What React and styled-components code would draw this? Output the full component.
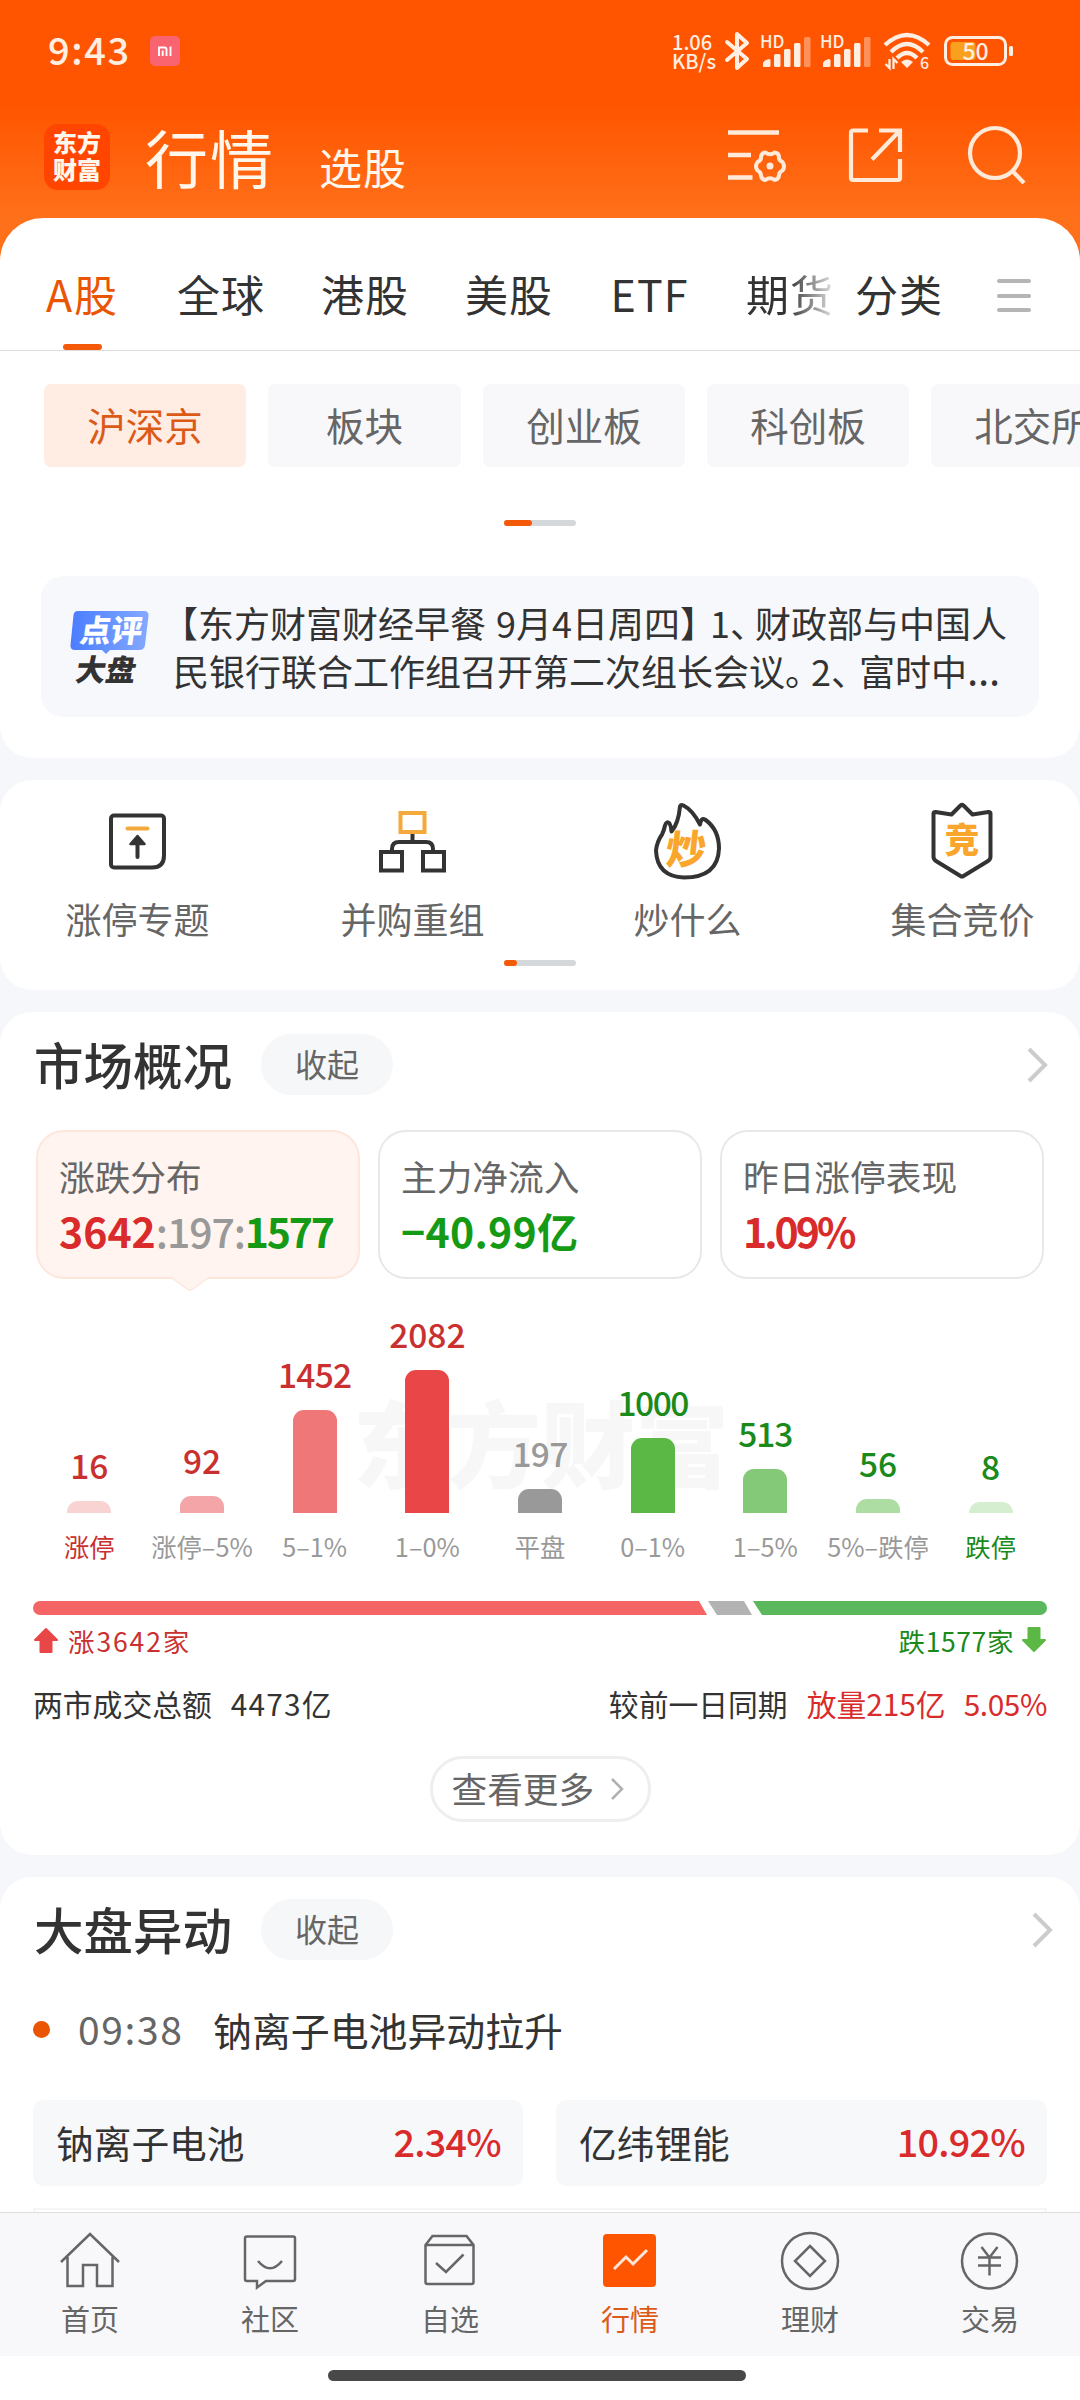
import styled, { createGlobalStyle, css } from "styled-components";

const GlobalStyle = createGlobalStyle`
  * {
    box-sizing: border-box;
  }
  body {
    margin: 0;
    background: #f5f7fa;
    font-family: "Noto Sans CJK SC", "Noto Sans", sans-serif;
    color: #333;
  }
`;

const RED = "#d92b2b";
const GREEN = "#159a15";
const ORANGE = "#ea5504";

const Screen = styled.div`
  width: 1080px;
  height: 2400px;
  display: flex;
  flex-direction: column;
  overflow: hidden;
  background: linear-gradient(#ff5500 0, #ff5500 105px, #ff701a 218px) top /
      100% 300px no-repeat,
    #f5f7fa;
`;

const Content = styled.main`
  height: 2212px;
  flex: none;
  overflow: hidden;
`;

/* status bar */

const StatusBar = styled.div`
  height: 102px;
  padding: 0 66px 0 48px;
  display: flex;
  align-items: center;
  color: #ffeee2;
`;

const Clock = styled.div`
  width: 102px;
  font-size: 38px;
  font-weight: 500;
  line-height: 40px;
  letter-spacing: 1.6px;
  padding-bottom: 4px;
`;

const MiBadge = styled.svg`
  width: 30px;
  height: 30px;
`;

const StatusRight = styled.div`
  margin-left: auto;
  display: flex;
  align-items: center;
`;

const NetSpeed = styled.div`
  width: 53px;
  font-size: 20px;
  line-height: 19px;
  font-weight: 500;
  padding-bottom: 1px;
  white-space: nowrap;
`;

const StatusIcon = styled.svg`
  display: block;
  flex: none;
  overflow: visible;
  margin-right: ${(p) => p.$gap || 0}px;
`;

/* header */

const Header = styled.header`
  height: 116px;
  padding: 0 54px 7px 44px;
  display: flex;
  align-items: center;
  color: #fff6ec;
`;

const Logo = styled.div`
  width: 66px;
  height: 66px;
  border-radius: 14px;
  background: #ff4500;
  display: flex;
  flex-direction: column;
  align-items: center;
  justify-content: center;
  padding-bottom: 4px;
  font-size: 24px;
  font-weight: 900;
  line-height: 27px;
`;

const HeaderTitle = styled.h1`
  margin: 0 0 0 35px;
  font-size: 63px;
  font-weight: 400;
  line-height: 70px;
  letter-spacing: 2px;
  padding-bottom: 1px;
`;

const HeaderSub = styled.div`
  margin: 18px 0 0 44px;
  font-size: 43px;
  line-height: 50px;
  letter-spacing: 1px;
`;

const HeaderIcons = styled.div`
  margin-left: auto;
  display: flex;
  align-items: center;
  gap: 62px;
  padding-bottom: 5px;
`;

/* white cards */

const Card = styled.section`
  background: #fff;
  border-radius: ${(p) => p.$radius || "32px"};
  height: ${(p) => p.$height}px;
  margin-bottom: 22px;
  overflow: hidden;
`;

const Tabs = styled.nav`
  height: 133px;
  border-bottom: 1px solid #dcdcdc;
  display: flex;
  padding: 0 44px;
  align-items: stretch;
`;

const TabList = styled.div`
  width: 793px;
  display: flex;
  gap: 56px;
  overflow: hidden;
  white-space: nowrap;
`;

const tabText = css`
  font-size: 43px;
  line-height: 64px;
  letter-spacing: 1px;
  padding-top: 43px;
`;

const Tab = styled.div`
  ${tabText}
  flex: none;
  min-width: ${(p) => p.$min || 0}px;
  display: flex;
  flex-direction: column;
  align-items: center;
  color: ${(p) => (p.$active ? ORANGE : "#333")};
  ${(p) =>
    p.$active &&
    css`
      letter-spacing: 2px;
      &::after {
        content: "";
        width: 39px;
        height: 6px;
        border-radius: 3px;
        margin-top: 19px;
        background: #f55a0a;
      }
    `}
  ${(p) =>
    p.$fade &&
    css`
      background: linear-gradient(90deg, #333 48%, #ddd 98%);
      background-clip: text;
      -webkit-background-clip: text;
      color: transparent;
    `}
`;

const TabMore = styled.div`
  ${tabText}
  margin-left: 18px;
  flex: none;
`;

const Burger = styled.div`
  width: 34px;
  height: 33px;
  margin: 61px 5px 0 auto;
  display: flex;
  flex-direction: column;
  justify-content: space-between;
  i {
    height: 4px;
    border-radius: 2px;
    background: #b5b5b5;
  }
`;

const Chips = styled.div`
  display: flex;
  gap: 22px;
  padding: 33px 0 0 44px;
`;

const Chip = styled.div`
  flex: none;
  width: ${(p) => p.$width}px;
  height: 83px;
  border-radius: 7px;
  background: ${(p) => (p.$active ? "#ffede4" : "#f8f8fa")};
  color: ${(p) => (p.$active ? "#dc5a17" : "#666")};
  font-size: 38.5px;
  line-height: 80px;
  text-align: center;
`;

const Pager = styled.div`
  width: 72px;
  height: 6px;
  border-radius: 3px;
  background: #d5d8db;
  margin: ${(p) => p.$top}px auto 0;
  &::before {
    content: "";
    display: block;
    width: ${(p) => p.$thumb}px;
    height: 6px;
    border-radius: 3px;
    background: #f55a0a;
  }
`;

const News = styled.div`
  height: 141px;
  margin: 50px 41px 0;
  border-radius: 22px;
  background: #f7f8fb;
  display: flex;
  align-items: center;
`;

const NewsTag = styled.svg`
  width: 104px;
  height: 100px;
  margin-left: 28px;
`;

const NewsText = styled.div`
  font-size: 36px;
  line-height: 48px;
  word-spacing: 2px;
  white-space: nowrap;
  padding-bottom: 2px;
`;

const Punct = styled.span`
  display: inline-block;
  width: ${(p) => p.$width}px;
  text-indent: ${(p) => p.$shift || 0}px;
`;

const Ellipsis = styled.span`
  font-family: "Noto Sans", sans-serif;
  font-size: 42px;
  line-height: 1px;
`;

/* shortcuts */

const Shortcuts = styled.div`
  display: grid;
  grid-template-columns: repeat(4, 275px);
`;

const Shortcut = styled.div`
  display: flex;
  flex-direction: column;
  align-items: center;
  padding-top: 21px;
  height: 180px;
  font-size: 36px;
  line-height: 52px;
  color: #666;
  svg {
    display: block;
    margin-bottom: 11px;
  }
`;

/* section heads */

const SectionHead = styled.div`
  height: 61px;
  margin: 22px 0 0;
  padding: 0 ${(p) => p.$right}px 0 34px;
  display: flex;
  align-items: center;
`;

const SectionTitle = styled.h2`
  margin: 0;
  width: 227px;
  font-size: 49.5px;
  font-weight: 500;
  line-height: 60px;
  padding-bottom: 2px;
  white-space: nowrap;
`;

const Pill = styled.div`
  width: 132px;
  height: 61px;
  border-radius: 31px;
  background: #f5f7f9;
  color: #666;
  font-size: 32px;
  line-height: 59px;
  text-align: center;
`;

const ChevronRight = styled.svg`
  margin-left: auto;
  display: block;
`;

/* stat cards */

const Stats = styled.div`
  display: grid;
  grid-template-columns: repeat(3, 324px);
  gap: 18px;
  padding: 35px 0 0 36px;
`;

const Stat = styled.div`
  position: relative;
  height: 149px;
  border-radius: 28px;
  border: 2px solid ${(p) => (p.$active ? "#fde6dc" : "#e8e8e8")};
  background: ${(p) => (p.$active ? "#fff4ef" : "#fff")};
  padding: 16px 0 0 21px;
  font-size: 35.7px;
  line-height: 56px;
  color: #666;
`;

const StatTail = styled.svg`
  position: absolute;
  left: 133px;
  bottom: -15px;
`;

const StatValue = styled.div`
  display: flex;
  font-size: 41px;
  line-height: 52px;
  font-weight: 600;
  letter-spacing: ${(p) => p.$spacing || 0}px;
  color: ${(p) => p.$color || "#999"};
`;

const ValuePart = styled.span`
  color: ${(p) => p.$color || "#999"};
  font-weight: ${(p) => (p.$color ? 600 : 500)};
  letter-spacing: ${(p) => p.$spacing || 0}px;
`;

/* distribution chart */

const Chart = styled.div`
  position: relative;
  height: 234px;
  margin: 0 33px;
  display: grid;
  grid-template-columns: repeat(9, 1fr);
`;

const Watermark = styled.div`
  position: absolute;
  left: 320px;
  top: 106px;
  font-size: 94px;
  font-weight: 900;
  line-height: 110px;
  color: #f7f7f7;
`;

const Column = styled.div`
  position: relative;
  display: flex;
  flex-direction: column;
  align-items: center;
  justify-content: flex-end;
`;

const ColumnValue = styled.div`
  font-size: 33.5px;
  font-weight: 500;
  line-height: 40px;
  margin-bottom: 16px;
  letter-spacing: ${(p) => p.$spacing || 0}px;
  color: ${(p) => p.$color};
`;

const Bar = styled.div`
  width: 44px;
  border-radius: 11px 11px 0 0;
  background: ${(p) => p.$color};
`;

const Axis = styled.div`
  margin: 15px 33px 0;
  height: 40px;
  display: grid;
  grid-template-columns: repeat(9, 1fr);
`;

const AxisLabel = styled.div`
  font-size: 25.3px;
  line-height: 37px;
  display: flex;
  justify-content: center;
  white-space: nowrap;
  color: ${(p) => p.$color || "#999"};
`;

const Ratio = styled.div`
  margin: 33px 33px 0;
  height: 14px;
  border-radius: 7px;
  overflow: hidden;
  display: flex;
  gap: 1px;
`;

const RatioPart = styled.div`
  width: ${(p) => p.$width}px;
  background: ${(p) => p.$color};
  clip-path: polygon(${(p) => p.$clip});
`;

const Line = styled.div`
  display: flex;
  align-items: center;
  height: ${(p) => p.$height}px;
  margin: ${(p) => p.$top}px 33px 0;
  font-size: ${(p) => p.$size}px;
  line-height: ${(p) => p.$height - 3}px;
  padding-bottom: 4px;
  white-space: nowrap;
`;

const Words = styled.span`
  color: ${(p) => p.$color || "#333"};
  margin-left: ${(p) => (p.$push ? "auto" : `${p.$gap || 0}px`)};
  letter-spacing: ${(p) => p.$spacing || 0}px;
`;

const MoreButton = styled.div`
  width: 221px;
  height: 66px;
  margin: 24px auto 0;
  border: 3px solid #eee;
  border-radius: 33px;
  display: flex;
  align-items: center;
  padding: 0 0 3px 19px;
  font-size: 35.7px;
  line-height: 50px;
  color: #666;
  svg {
    margin: 3px 0 0 16px;
  }
`;

/* movements */

const Move = styled.div`
  display: flex;
  align-items: center;
  margin: 39px 33px 0;
  height: 60px;
  font-size: 38.9px;
  line-height: 56px;
`;

const Dot = styled.i`
  width: 17px;
  height: 17px;
  border-radius: 50%;
  background: ${ORANGE};
`;

const Time = styled.span`
  width: 135px;
  margin-left: 28px;
  padding-bottom: 2px;
  font-size: 39px;
  letter-spacing: 1.6px;
  color: #666;
`;

const MoveText = styled.span`
  padding-bottom: 1px;
`;

const Quotes = styled.div`
  display: grid;
  grid-template-columns: 490px 491px;
  gap: 33px;
  margin: 41px 33px 22px;
`;

const Quote = styled.div`
  height: 86px;
  border-radius: 10px;
  background: #f7f8fa;
  display: flex;
  justify-content: space-between;
  padding: 0 22px 0 23px;
  font-size: 37.7px;
  line-height: 84px;
`;

const QuoteChange = styled.span`
  color: ${RED};
  font-weight: 500;
  line-height: 82px;
  letter-spacing: -0.7px;
`;

const TableEdge = styled.div`
  height: 40px;
  margin: 0 33px;
  border: 2px solid #f5f5f5;
`;

/* bottom nav */

const BottomNav = styled.nav`
  flex: none;
  height: 144px;
  border-top: 1px solid #dedede;
  background: #f8f8fb;
  display: grid;
  grid-template-columns: repeat(6, 1fr);
`;

const NavItem = styled.div`
  display: flex;
  flex-direction: column;
  align-items: center;
  padding-top: 17px;
  font-size: 29px;
  line-height: 40px;
  color: ${(p) => (p.$active ? "#dc5a17" : "#666")};
  svg {
    display: block;
    margin-bottom: 6px;
  }
`;

const HomeIndicator = styled.div`
  flex: none;
  height: 44px;
  background: #fff;
  display: flex;
  justify-content: center;
  padding: 14px 6px 0 0;
  &::after {
    content: "";
    width: 418px;
    height: 11px;
    border-radius: 6px;
    background: #484848;
  }
`;

const Signal = ({ gap }) => (
  <StatusIcon width="50" height="38" viewBox="0 0 50 38" $gap={gap} fill="#ffeee2">
    <text x="-1" y="16" fontSize="17" fontWeight="500">
      HD
    </text>
    <path d="M2 35v-4q1-3 6-4q1.500 0 1.500 1.500v5q0 1.500-1.500 1.500z" />
    <rect x="13" y="22" width="6.500" height="13" rx="1.500" />
    <rect x="23" y="17" width="6.500" height="18" rx="1.500" />
    <rect x="33" y="11" width="6.500" height="24" rx="1.500" />
    <rect x="43" y="5" width="6.500" height="30" rx="1.500" opacity=".4" />
  </StatusIcon>
);

const Arrow = ({ color, down }) => (
  <svg width="26" height="26" viewBox="0 0 26 26" fill={color} stroke={color} strokeWidth="2" strokeLinejoin="round">
    <path d="M13 2L24 13H18.500V25H7.500V13H2Z" transform={down ? "rotate(180 13 13)" : undefined} />
  </svg>
);

const Chevron = () => (
  <ChevronRight width="22" height="36" viewBox="0 0 22 36" fill="none" stroke="#ccc" strokeWidth="4">
    <path d="M2 2L18 18L2 34" />
  </ChevronRight>
);

const shortcuts = [
  {
    label: "涨停专题",
    icon: (
      <>
        <path d="M14 14.500h47a3 3 0 0 1 3 3v37q0 12-12 12h-38a3 3 0 0 1-3-3v-46a3 3 0 0 1 3-3z" />
        <path d="M27.500 27.500h20" stroke="#f3a93c" strokeLinecap="round" />
        <path d="M37.500 56v-17" strokeLinecap="round" />
        <path d="M37.500 35l7 8h-14z" fill="#333" strokeWidth="2.500" strokeLinejoin="round" />
      </>
    ),
  },
  {
    label: "并购重组",
    icon: (
      <>
        <rect x="25.500" y="12" width="24" height="19" stroke="#f3a93c" />
        <path d="M37.500 33v8M17 50v-2q0-7 7-7h27q7 0 7 7v2" />
        <rect x="6" y="51" width="21" height="18.500" />
        <rect x="48" y="51" width="21" height="18.500" />
      </>
    ),
  },
  {
    label: "炒什么",
    icon: (
      <>
        <path
          d="M30 5.500q1-2 3.500-1q9 4.500 16.500 19q1-7 5-5q14 10 14 29q-1 29-35 29q-27-1-28-27q1-9 6-16q2-4 3-9q1.500-5 4.500-2q2 3 2 8q7-8 8.500-25z"
          strokeLinejoin="round"
        />
        <text x="17" y="63" fontSize="40" fontWeight="900" fill="#faa62d" stroke="none" transform="skewX(-6) translate(4 0)">
          炒
        </text>
      </>
    ),
  },
  {
    label: "集合竞价",
    icon: (
      <>
        <path
          d="M8.500 12.500q0-1.500 2-1.500l16 2.500l9-9q1.500-1.200 3 0l9 9l16-2.500q2 0 2 1.500v43q0 3-2.500 4.500l-24.500 15q-1.500 1-3 0l-24.500-15q-2.500-1.500-2.500-4.500z"
          strokeLinejoin="round"
        />
        <text x="37" y="52" fontSize="35" fontWeight="900" fill="#faa62d" stroke="none" textAnchor="middle">
          竞
        </text>
      </>
    ),
  },
];

const columns = [
  { value: 16, height: 12, bar: "#f9d2d2", text: "#c9302f", label: "涨停", labelColor: "#c9302f" },
  { value: 92, height: 17, bar: "#f3a5a8", text: "#c9302f", label: "涨停–5%" },
  { value: 1452, height: 103, bar: "#f07778", text: "#c9302f", label: "5–1%", spacing: -0.8 },
  { value: 2082, height: 143, bar: "#e94747", text: "#c9302f", label: "1–0%" },
  { value: 197, height: 24, bar: "#999", text: "#999", label: "平盘", spacing: -0.8 },
  { value: 1000, height: 75, bar: "#5bb844", text: "#1a8a1a", label: "0–1%", spacing: -1.5 },
  { value: 513, height: 44, bar: "#84c977", text: "#1a8a1a", label: "1–5%", spacing: -1 },
  { value: 56, height: 14, bar: "#aedda3", text: "#1a8a1a", label: "5%–跌停" },
  { value: 8, height: 11, bar: "#d5eed0", text: "#1a8a1a", label: "跌停", labelColor: "#1a8a1a" },
];

const navItems = [
  {
    label: "首页",
    icon: <path d="M2 32L31 4L60 32M8.500 27V56H24V35H38V56H53.500V27" />,
  },
  {
    label: "社区",
    icon: (
      <>
        <path d="M8 6.500H54a2 2 0 0 1 2 2V49a2 2 0 0 1-2 2H27L18 57.500V51H8a2 2 0 0 1-2-2V8.500a2 2 0 0 1 2-2z" />
        <path d="M19 31q12 14.500 24 0" />
      </>
    ),
  },
  {
    label: "自选",
    icon: (
      <>
        <path d="M6.500 15L13.500 6H47.500L54.500 15V52a2 2 0 0 1-2 2H8.500a2 2 0 0 1-2-2zM6.500 15H54.500" />
        <path d="M17 33L27 42L44.500 24.500" />
      </>
    ),
  },
  {
    label: "行情",
    active: true,
    icon: (
      <>
        <rect x="4" y="4" width="53" height="53" rx="4" fill="#ff5500" stroke="none" />
        <path d="M15 39L27 27L34 34L48 20" stroke="#ffe6d8" strokeWidth="3" />
      </>
    ),
  },
  {
    label: "理财",
    icon: (
      <>
        <circle cx="31" cy="31" r="28" />
        <path d="M31 16L46 31L31 46L16 31z" />
      </>
    ),
  },
  {
    label: "交易",
    icon: (
      <>
        <circle cx="30.500" cy="31" r="27.500" />
        <path d="M22.500 17L30.500 27.500L38.500 17M30.500 27.500V45.500M19 27.500H42M19 35.500H42" />
      </>
    ),
  },
];

const App = () => {
  return (
    <Screen>
      <GlobalStyle />
      <Content>
        <StatusBar>
          <Clock>9:43</Clock>
          <MiBadge viewBox="0 0 30 30">
            <rect width="30" height="30" rx="5" fill="#fa6470" />
            <path d="M9 20V11.500H14.500Q16.500 11.500 16.500 13.500V20M12.700 14.500V20M20.500 10.500V20" fill="none" stroke="#fff" strokeWidth="1.900" />
          </MiBadge>
          <StatusRight>
            <NetSpeed>
              1.06
              <br />
              KB/s
            </NetSpeed>
            <StatusIcon width="24" height="40" viewBox="0 0 24 40" $gap={12} fill="none" stroke="#ffeee2" strokeWidth="4" strokeLinejoin="round" strokeLinecap="round">
              <path d="M2 11L22 28L12 37V3L22 12L2 29" />
            </StatusIcon>
            <Signal gap={10} />
            <Signal gap={12} />
            <StatusIcon width="48" height="38" viewBox="0 0 48 38" $gap={13} fill="none" stroke="#ffeee2" strokeWidth="4.200">
              <path d="M2 13Q24-7 46 13M8 20Q24 4 40 20M14 26Q24 16 34 26" />
              <path d="M18 30Q24 25 30 30L24 36z" fill="#ffeee2" stroke="none" />
              <path d="M6.500 27V36L2.500 32M10.500 37V27L14.500 31" strokeWidth="2.300" />
              <text x="37" y="37" fontSize="16" fontWeight="500" fill="#ffeee2" stroke="none">
                6
              </text>
            </StatusIcon>
            <StatusIcon width="70" height="32" viewBox="0 0 70 32">
              <rect x="1.500" y="2.500" width="60" height="27" rx="7" fill="none" stroke="#ffeee2" strokeWidth="3" />
              <rect x="6.500" y="7" width="25" height="18" rx="3" fill="#f9a01f" />
              <rect x="65" y="11" width="4" height="10" rx="1.500" fill="#ffeee2" />
              <text x="31.500" y="24.500" fontSize="23" fontWeight="500" fill="#ffeee2" textAnchor="middle">
                50
              </text>
            </StatusIcon>
          </StatusRight>
        </StatusBar>

        <Header>
          <Logo>
            <span>东方</span>
            <span>财富</span>
          </Logo>
          <HeaderTitle>行情</HeaderTitle>
          <HeaderSub>选股</HeaderSub>
          <HeaderIcons>
            <svg width="60" height="60" viewBox="0 0 60 60" fill="none" stroke="#ffe9d8" strokeWidth="4.500">
              <path d="M2 8.500H53M2 31H25M2 53.500H26.500" />
              <path
                d="M39.500 28.500q4.500 3.500 9 0q4.500.5 4.500 5q0 3 3.500 4.500q3 4.500 0 8.500q-3.500 1.500-3.500 5q-.5 4-4.500 4.500q-4.500-3.500-9 0q-4-.5-4.500-4.500q0-3.500-3.500-5q-3-4 0-8.500q3.500-1.500 3.500-4.500q0-4.500 4.500-5z"
                strokeWidth="4"
                strokeLinejoin="round"
              />
              <circle cx="44" cy="42" r="3.500" fill="#ffe9d8" stroke="none" />
            </svg>
            <svg width="56" height="60" viewBox="0 0 56 60" fill="none" stroke="#ffe9d8" strokeWidth="4.200">
              <path d="M20 6.500H5a2 2 0 0 0-2 2V54a2 2 0 0 0 2 2H50a2 2 0 0 0 2-2V35M31 6.500H52V28M51 7.500L24 35.500" />
            </svg>
            <svg width="60" height="60" viewBox="0 0 60 60" fill="none" stroke="#ffe9d8" strokeWidth="4.200">
              <circle cx="29" cy="29" r="25" />
              <path d="M46 46.500L58 59" />
            </svg>
          </HeaderIcons>
        </Header>

        <Card $height={540} $radius="43px 43px 32px 32px">
          <Tabs>
            <TabList>
              <Tab $active $min={77}>
                A股
              </Tab>
              <Tab>全球</Tab>
              <Tab>港股</Tab>
              <Tab>美股</Tab>
              <Tab $min={81}>ETF</Tab>
              <Tab $fade>期货</Tab>
            </TabList>
            <TabMore>分类</TabMore>
            <Burger>
              <i />
              <i />
              <i />
            </Burger>
          </Tabs>
          <Chips>
            <Chip $width={202} $active>
              沪深京
            </Chip>
            <Chip $width={193}>板块</Chip>
            <Chip $width={202}>创业板</Chip>
            <Chip $width={202}>科创板</Chip>
            <Chip $width={202}>北交所</Chip>
          </Chips>
          <Pager $top={53} $thumb={28} />
          <News>
            <NewsTag viewBox="0 0 104 100">
              <defs>
                <linearGradient id="tag" x1="0" x2="1">
                  <stop offset="0" stopColor="#4a7dff" />
                  <stop offset="1" stopColor="#84a9ff" />
                </linearGradient>
              </defs>
              <path d="M9 14H75Q80 14 79.500 19L76 48Q75.500 53 70 53H41L37 57L33 53H6Q1 53 1.500 48L4.500 18Q5 14 9 14z" fill="url(#tag)" />
              <text x="16" y="45" fontSize="31" fontWeight="900" fill="#fff" transform="skewX(-8)">
                点评
              </text>
              <text x="20" y="84" fontSize="30" fontWeight="900" fill="#333" transform="skewX(-10)">
                大盘
              </text>
            </NewsTag>
            <NewsText>
              <div>
                <Punct $width={25} $shift={-11}>【</Punct>东方财富财经早餐 9月4日周四
                <Punct $width={30}>】</Punct>1<Punct $width={25}>、</Punct>财政部与中国人
              </div>
              <div>
                民银行联合工作组召开第二次组长会议
                <Punct $width={26}>。</Punct>2<Punct $width={28}>、</Punct>富时中<Ellipsis>…</Ellipsis>
              </div>
            </NewsText>
          </News>
        </Card>

        <Card $height={210}>
          <Shortcuts>
            {shortcuts.map((s) => (
              <Shortcut key={s.label}>
                <svg width="76" height="80" viewBox="0 0 76 80" fill="none" stroke="#333" strokeWidth="4">
                  {s.icon}
                </svg>
                {s.label}
              </Shortcut>
            ))}
          </Shortcuts>
          <Pager $top={0} $thumb={13} />
        </Card>

        <Card $height={843}>
          <SectionHead $right={31}>
            <SectionTitle>市场概况</SectionTitle>
            <Pill>收起</Pill>
            <Chevron />
          </SectionHead>
          <Stats>
            <Stat $active>
              涨跌分布
              <StatValue>
                <ValuePart $color={RED}>3642</ValuePart>
                <ValuePart $spacing={-1.1}>:197:</ValuePart>
                <ValuePart $color={GREEN} $spacing={-2.2}>
                  1577
                </ValuePart>
              </StatValue>
              <StatTail width="38" height="16" viewBox="0 0 38 16">
                <path d="M1 1H37L22 13Q19 15 16 13z" fill="#fff4ef" />
                <path d="M1 2L16 13Q19 15 22 13L37 2" fill="none" stroke="#fde6dc" strokeWidth="1.500" />
              </StatTail>
            </Stat>
            <Stat>
              主力净流入
              <StatValue $color={GREEN} $spacing={0.3}>
                −40.99亿
              </StatValue>
            </Stat>
            <Stat>
              昨日涨停表现
              <StatValue $color={RED} $spacing={-3}>
                1.09%
              </StatValue>
            </Stat>
          </Stats>
          <Chart>
            <Watermark>东方财富</Watermark>
            {columns.map((c) => (
              <Column key={c.label}>
                <ColumnValue $color={c.text} $spacing={c.spacing}>
                  {c.value}
                </ColumnValue>
                <Bar $color={c.bar} style={{ height: c.height }} />
              </Column>
            ))}
          </Chart>
          <Axis>
            {columns.map((c) => (
              <AxisLabel key={c.label} $color={c.labelColor}>
                {c.label}
              </AxisLabel>
            ))}
          </Axis>
          <Ratio>
            <RatioPart $width={674} $color="#f66565" $clip="0 0, 666px 0, 100% 100%, 0 100%" />
            <RatioPart $width={44} $color="#b3b3b3" $clip="0 0, 36px 0, 100% 100%, 9px 100%" />
            <RatioPart $width={294} $color="#5cb85c" $clip="0 0, 100% 0, 100% 100%, 9px 100%" />
          </Ratio>
          <Line $height={54} $top={0} $size={26.5}>
            <Arrow color="#e94747" />
            <Words $color="#c9302f" $gap={9} $spacing={1.9}>
              涨3642家
            </Words>
            <Words $color="#1a8a1a" $push $spacing={0.6}>
              跌1577家
            </Words>
            <Words $gap={7} />
            <Arrow color="#5bb844" down />
          </Line>
          <Line $height={54} $top={9} $size={29.8}>
            <Words>两市成交总额</Words>
            <Words $gap={19} $spacing={1.2}>
              4473亿
            </Words>
            <Words $push>较前一日同期</Words>
            <Words $gap={19} $color={RED}>
              放量215亿
            </Words>
            <Words $gap={18} $color={RED} $spacing={-0.4}>
              5.05%
            </Words>
          </Line>
          <MoreButton>
            查看更多
            <svg width="16" height="24" viewBox="0 0 16 24" fill="none" stroke="#b0b0b0" strokeWidth="2.500">
              <path d="M2 2L12 12L2 22" />
            </svg>
          </MoreButton>
        </Card>

        <Card $height={400}>
          <SectionHead $right={26}>
            <SectionTitle>大盘异动</SectionTitle>
            <Pill>收起</Pill>
            <Chevron />
          </SectionHead>
          <Move>
            <Dot />
            <Time>09:38</Time>
            <MoveText>钠离子电池异动拉升</MoveText>
          </Move>
          <Quotes>
            <Quote>
              钠离子电池
              <QuoteChange>2.34%</QuoteChange>
            </Quote>
            <Quote>
              亿纬锂能
              <QuoteChange>10.92%</QuoteChange>
            </Quote>
          </Quotes>
          <TableEdge />
        </Card>
      </Content>

      <BottomNav>
        {navItems.map((n) => (
          <NavItem key={n.label} $active={n.active}>
            <svg width="62" height="62" viewBox="0 0 62 62" fill="none" stroke="#666" strokeWidth="2.500">
              {n.icon}
            </svg>
            {n.label}
          </NavItem>
        ))}
      </BottomNav>
      <HomeIndicator />
    </Screen>
  );
};

export default App;
